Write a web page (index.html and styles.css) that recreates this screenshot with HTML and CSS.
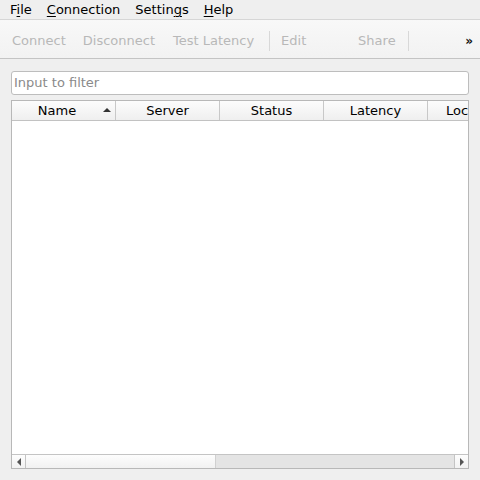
FILE: index.html
```html
<!DOCTYPE html>
<html>
<head>
<meta charset="utf-8">
<link rel="stylesheet" href="styles.css">
</head>
<body>
<div class="window">
  <div class="menubar">
    <span class="menu">F<u>i</u>le</span>
    <span class="menu"><u>C</u>onnection</span>
    <span class="menu">Settin<u>g</u>s</span>
    <span class="menu"><u>H</u>elp</span>
  </div>
  <div class="toolbar">
    <span class="tbtn">Connect</span>
    <span class="tbtn">Disconnect</span>
    <span class="tbtn test">Test Latency</span>
    <span class="tsep"></span>
    <span class="tbtn edit">Edit</span>
    <span class="tbtn share">Share</span>
    <span class="tsep last"></span>
    <span class="chevron">»</span>
  </div>
  <div class="content">
    <div class="filter">Input to filter</div>
    <div class="table">
      <div class="header">
        <div class="col first">Name<span class="sort"></span></div>
        <div class="col">Server</div>
        <div class="col">Status</div>
        <div class="col">Latency</div>
        <div class="col last">Location</div>
      </div>
      <div class="body"></div>
      <div class="hscroll">
        <div class="sbtn"><span class="arr-left"></span></div>
        <div class="handle"></div>
        <div class="track"></div>
        <div class="sbtn right"><span class="arr-right"></span></div>
      </div>
    </div>
  </div>
</div>
</body>
</html>
```
FILE: styles.css
```css
html, body {
  margin: 0;
  padding: 0;
}
body {
  background: #efefef;
  font-family: "DejaVu Sans", sans-serif;
  font-size: 13px;
  color: #000;
  width: 480px;
  height: 480px;
  overflow: hidden;
}
.window {
  display: flex;
  flex-direction: column;
  height: 480px;
}
.menubar {
  display: flex;
  gap: 1px;
  height: 19px;
  line-height: 19px;
  padding-left: 3px;
  background: #efefef;
}
.menu {
  padding: 0 7px;
  white-space: nowrap;
}
.menu u {
  text-decoration-thickness: 1px;
  text-underline-offset: 2px;
}
.toolbar {
  display: flex;
  align-items: center;
  box-sizing: border-box;
  height: 40px;
  padding-top: 3px;
  border-top: 1px solid #d6d6d6;
  border-bottom: 1px solid #c4c4c4;
  background: linear-gradient(#f8f8f8, #f2f2f2);
  padding-left: 4px;
  color: #b8b8b8;
}
.tbtn {
  padding: 0 8px;
  margin-right: 1px;
  white-space: nowrap;
  line-height: 20px;
}
.tbtn.test {
  margin-left: 1px;
}
.tsep {
  width: 1px;
  height: 20px;
  background: #d8d8d8;
  margin: 0 3px 0 6px;
}
.tsep.last {
  margin-left: 3px;
}
.tbtn.edit {
  width: 60px;
}
.tbtn.share {
  width: 38px;
}
.chevron {
  margin-left: auto;
  margin-right: 7px;
  color: #111;
  font-weight: bold;
  font-size: 12px;
  line-height: 14px;
}
.content {
  flex: 1;
  display: flex;
  flex-direction: column;
  padding: 12px 11px 11px 11px;
  gap: 5px;
}
.filter {
  height: 22px;
  line-height: 22px;
  border: 1px solid #bdbdbd;
  border-radius: 3px;
  background: #fff;
  color: #8a8a8a;
  padding-left: 2px;
}
.table {
  flex: 1;
  display: flex;
  flex-direction: column;
  border: 1px solid #b8b8b8;
  background: #fff;
  overflow: hidden;
}
.header {
  display: flex;
  height: 19px;
  border-bottom: 1px solid #c2c2c2;
  background: linear-gradient(#fcfcfc, #efefef);
}
.col {
  position: relative;
  flex: 0 0 103px;
  box-sizing: content-box;
  border-right: 1px solid #c8c8c8;
  text-align: center;
  line-height: 19px;
  white-space: nowrap;
}
.col.first {
  flex-basis: 90px;
  padding-right: 13px;
}
.col.last {
  flex: 1 0 auto;
  border-right: none;
  overflow: hidden;
  padding-left: 18px;
  text-align: left;
}
.sort {
  position: absolute;
  right: 4px;
  top: 7px;
  width: 0;
  height: 0;
  border-left: 4px solid transparent;
  border-right: 4px solid transparent;
  border-bottom: 4px solid #333;
}
.body {
  flex: 1;
}
.hscroll {
  display: flex;
  height: 13px;
  border-top: 1px solid #c4c4c4;
  background: #e4e4e4;
}
.sbtn {
  flex: 0 0 13px;
  background: linear-gradient(#fdfdfd, #f2f2f2);
  border-right: 1px solid #c4c4c4;
  display: flex;
  align-items: center;
  justify-content: center;
}
.sbtn.right {
  border-right: none;
  border-left: 1px solid #c4c4c4;
}
.arr-left {
  width: 0;
  height: 0;
  border-top: 4px solid transparent;
  border-bottom: 4px solid transparent;
  border-right: 4px solid #555;
}
.arr-right {
  width: 0;
  height: 0;
  border-top: 4px solid transparent;
  border-bottom: 4px solid transparent;
  border-left: 4px solid #555;
}
.handle {
  flex: 0 0 189px;
  background: linear-gradient(#fdfdfd, #f1f1f1);
  border-right: 1px solid #d0d0d0;
}
.track {
  flex: 1;
}
```
